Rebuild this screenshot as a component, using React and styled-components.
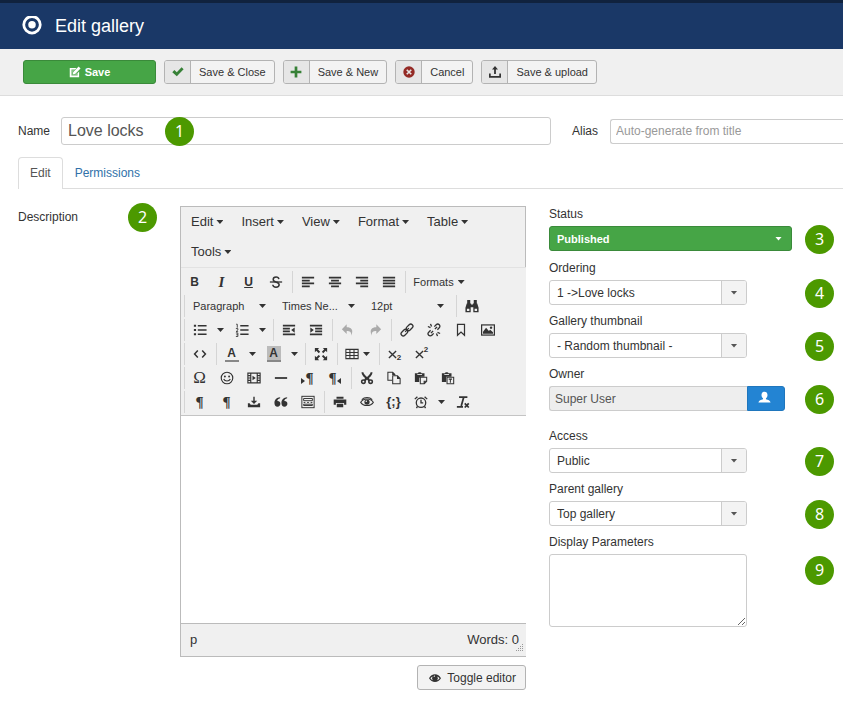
import React from "react";
import styled, { createGlobalStyle, css } from "styled-components";

const Global = createGlobalStyle`
  * { box-sizing: border-box; }
  body {
    margin: 0;
    background: #fff;
    color: #333;
    font: 12px/18px "Liberation Sans", Arial, sans-serif;
  }
  button, input, select, textarea { font: inherit; color: inherit; margin: 0; }
`;

/* ---------- icons ---------- */

const Svg = styled.svg`
  display: block;
  flex: none;
  width: ${(p) => p.$size || 14}px;
  height: ${(p) => p.$size || 14}px;
  color: ${(p) => p.$color || "inherit"};
  fill: currentColor;
`;

const line = { fill: "none", stroke: "currentColor" };

const shapes = {
  target: (
    <>
      <circle cx="8" cy="7" r="6.6" {...line} strokeWidth="2.2" />
      <circle cx="8" cy="7" r="3" />
    </>
  ),
  compose: (
    <>
      <path d="M1 2.500h9L8.200 4.600H3.300v8.100h8.100V9.500l2.100-2.100V15H1z" />
      <path d="M12.900.8l2.500 2.400-7.200 7.300-3.300.9.8-3.400z" />
      <path d="M3.300 4.600h4.900L5.300 7.600l-.9 4.300 4.300-.9 2.700-2.600v4.300H3.300z" opacity=".35" />
    </>
  ),
  check: <path d="M.4 8.200l2.800-2.900 3.200 3L12.800 1.600l2.700 2.800-9.100 9.300z" />,
  plus: <path d="M6.200.8h3.600v5.400h5.400v3.600H9.800v5.400H6.200V9.800H.8V6.200h5.400z" />,
  cancel: (
    <>
      <circle cx="8" cy="8" r="7.600" />
      <path d="M5 5l6 6M11 5l-6 6" stroke="#e6e6e6" strokeWidth="2.200" />
    </>
  ),
  upload: (
    <path d="M8 0l4 4.600H9.200v6H6.800v-6H4zM0 10h2.300v3.200h11.400V10H16v5.600H0z" />
  ),
  user: (
    <path d="M8 1c2.200 0 3.700 1.500 3.700 4 0 1.700-.8 3.200-1.900 4v1.300c2.600.6 5.200 1.600 5.700 3.700H.5c.5-2.100 3.100-3.100 5.700-3.700V9C5.100 8.200 4.300 6.700 4.300 5c0-2.500 1.500-4 3.700-4z" />
  ),
  eyeSolid: (
    <path
      fillRule="evenodd"
      d="M0 8.200C1.800 5 4.700 3.100 8 3.100s6.200 1.900 8 5.100c-1.800 3.200-4.700 5-8 5s-6.200-1.800-8-5zm1.900 0c.8 1.300 1.900 2.200 3.100 2.800a4.500 4.500 0 0 1-.3-5c-1.100.4-2 1.200-2.800 2.200zm9.200-2.300a4.500 4.500 0 0 1-.2 5.100c1.300-.6 2.400-1.500 3.200-2.800-.8-1-1.800-1.800-3-2.300zM8 4.700c-1 0-1.800.8-1.800 1.800h1c0-.5.3-.9.8-.9z"
    />
  ),
  strike: (
    <>
      <path d="M1 8h14" {...line} strokeWidth="1.500" />
      <path d="M11.300 4.600C11 3 9.700 2.300 8.100 2.300c-1.900 0-3.300 1-3.300 2.700 0 1.500 1.200 2.300 3.200 3 2.400.7 3.600 1.500 3.600 3.200 0 1.700-1.500 2.700-3.600 2.700-2 0-3.500-.9-3.700-2.800" {...line} strokeWidth="1.700" />
    </>
  ),
  left: <path d="M1 2h14v2H1zM1 5.300h9v2H1zM1 8.600h14v2H1zM1 11.900h9v2H1z" />,
  center: <path d="M1 2h14v2H1zM3.500 5.300h9v2h-9zM1 8.600h14v2H1zM3.500 11.900h9v2h-9z" />,
  right: <path d="M1 2h14v2H1zM6 5.300h9v2H6zM1 8.600h14v2H1zM6 11.900h9v2H6z" />,
  justify: <path d="M1 2h14v2H1zM1 5.300h14v2H1zM1 8.600h14v2H1zM1 11.900h14v2H1z" />,
  find: (
    <path
      fillRule="evenodd"
      d="M2.500 1h3.500v4h1v1.300h2V5h1V1h3.500v4H14l1.500 5v5H9.500V9.500h-3V15h-6v-5L2 5h.5zm-.3 10v2.700H5V11zm8.800 0v2.700h2.800V11z"
    />
  ),
  ul: <path d="M1 2h2.500v2.300H1zM5.500 2.300h10v1.700h-10zM1 6.900h2.500v2.300H1zM5.500 7.200h10v1.700h-10zM1 11.700h2.500V14H1zM5.500 12h10v1.700h-10z" />,
  ol: (
    <>
      <path d="M6 2.300h9.500V4H6zM6 7.200h9.500v1.700H6zM6 12h9.500v1.700H6z" />
      <path d="M1.300 1.400h1.300v4M1 6.400h2.300v1.500L1.200 9.900h2.400M1 11.400h2.300v4H1M1.500 13.400h1.800" {...line} strokeWidth="1" />
    </>
  ),
  outdent: <path d="M1 2h14v2H1zM1 5.300h8v2H1zM1 8.600h8v2H1zM1 11.900h14v2H1zM14.500 5v6l-4-3z" />,
  indent: <path d="M1 2h14v2H1zM7 5.300h8v2H7zM7 8.600h8v2H7zM1 11.900h14v2H1zM1.500 5v6l4-3z" />,
  undo: <path d="M6.500 1.500v3.300c5 0 8.300 2.700 5.200 9.700.4-4.500-1.500-5.500-5.200-5.500v3.500L1 7z" />,
  redo: <path d="M9.500 1.500v3.300c-5 0-8.300 2.700-5.200 9.700C3.900 10 5.800 9 9.500 9v3.500L15 7z" />,
  link: (
    <g transform="rotate(-45 8 8)" {...line} strokeWidth="1.500">
      <rect x="-.5" y="5.500" width="8.500" height="5" rx="2.500" />
      <rect x="8" y="5.500" width="8.500" height="5" rx="2.500" />
      <path d="M5 8h6" />
    </g>
  ),
  unlink: (
    <g {...line} strokeWidth="1.500">
      <g transform="rotate(-45 8 8)">
        <path d="M5 5.500H2a2.500 2.500 0 0 0 0 5h3M11 5.500h3a2.500 2.500 0 0 1 0 5h-3M3 8h3.500M9.500 8H13" />
      </g>
      <path d="M4 1l1.200 3M1 4l3 1.200M12 15l-1.200-3M15 12l-3-1.200" />
    </g>
  ),
  bookmark: <path d="M4 1.500h8V14l-4-3.600L4 14z" {...line} strokeWidth="1.400" />,
  image: (
    <>
      <rect x=".7" y="2.200" width="14.600" height="11.600" {...line} strokeWidth="1.400" />
      <path d="M2.300 12.300V10l3.500-4.500L9 9l1.500-1.300 3.200 3v1.600z" />
      <circle cx="11.500" cy="5.300" r="1.400" />
    </>
  ),
  code: <path d="M5.500 4L1.800 8l3.700 4M10.500 4l3.700 4-3.700 4" {...line} strokeWidth="1.700" />,
  fullscreen: (
    <path d="M1 1h5L4.300 2.700 7 5.400 5.400 7 2.700 4.300 1 6zM15 1v5l-1.700-1.700L10.600 7 9 5.400l2.700-2.700L10 1zM1 15v-5l1.700 1.700L5.400 9 7 10.600l-2.700 2.700L6 15zM15 15h-5l1.700-1.700L9 10.600 10.600 9l2.700 2.700L15 10z" />
  ),
  table: <path d="M1 2.700h14v10.600H1zM1 6.200h14M1 9.700h14M5.600 2.700v10.600M10.300 2.700v10.600" {...line} strokeWidth="1.200" />,
  smile: (
    <>
      <circle cx="8" cy="8" r="6.600" {...line} strokeWidth="1.300" />
      <circle cx="5.600" cy="6.200" r="1.100" />
      <circle cx="10.400" cy="6.200" r="1.100" />
      <path d="M4.200 9.200c1.500 3 6.100 3 7.600 0" {...line} strokeWidth="1.300" />
    </>
  ),
  film: (
    <>
      <path d="M1 2.500h14v11H1zM4.300 2.500v11M11.700 2.500v11M1 5.300h3.300M1 8h3.300M1 10.700h3.300M11.700 5.300H15M11.700 8H15M11.700 10.700H15" {...line} strokeWidth="1.300" />
      <path d="M6.300 5.300v5.400L10 8z" />
    </>
  ),
  rule: <path d="M1 7h14v2H1z" />,
  scissors: (
    <g {...line} strokeWidth="2.200">
      <path d="M2.800 1.500c0 3 2 4.500 8.200 9.500M13.200 1.500c0 3-2 4.500-8.200 9.500M5.500 8h5" />
      <ellipse cx="3.900" cy="12.200" rx="2" ry="1.900" strokeWidth="1.800" />
      <ellipse cx="12.100" cy="12.200" rx="2" ry="1.900" strokeWidth="1.800" />
    </g>
  ),
  copy: (
    <g {...line} strokeWidth="1.200">
      <path d="M6 10.500H1v-9h5.500l2.500 2.500v1M6.500 1.500V4H9" />
      <path d="M6.500 5.500H12l3 3v6H6.500zM12 5.500v3h3" fill="#f0f0f0" />
    </g>
  ),
  paste: (
    <>
      <path d="M1 2.500h3.500C4.500 1 8.500 1 8.500 2.500H12v4H7.500L6 8v4.500H1z" />
      <path d="M7.200 7.200h7.300v4.600l-2.700 2.700H7.200zM14.300 11.600h-2.700v2.800" {...line} strokeWidth="1.200" />
      <path d="M3.800 4h5.400" stroke="#f0f0f0" strokeWidth="1" />
    </>
  ),
  pasteText: (
    <>
      <path d="M1 2.500h3.500C4.500 1 8.500 1 8.500 2.500H12v4H6v6H1z" />
      <path d="M6.900 7.100h7.600v7.400H6.900zM8.800 9.300h3.800M10.700 9.300v4" {...line} strokeWidth="1.200" />
      <path d="M3.800 4h5.400" stroke="#f0f0f0" strokeWidth="1" />
    </>
  ),
  download: (
    <path d="M7.200 2h1.600v4.600h2.900L8 10.400 4.300 6.600h2.900zM1 9.500h2l1.200 1.700h7.600L13 9.500h2V14H1z" />
  ),
  quote: (
    <path d="M7 2.500v1.300C5 4.300 3.900 5.500 3.800 7 5.800 6.800 7.300 8 7.300 10c0 1.900-1.400 3.300-3.300 3.300C1.800 13.300.5 11.600.5 9c0-3.700 2.600-6.200 6.500-6.500zM15 2.500v1.300c-2 .5-3.100 1.700-3.200 3.200 2-.2 3.500 1 3.500 3 0 1.900-1.400 3.300-3.300 3.300-2.200 0-3.500-1.700-3.500-4.300 0-3.700 2.600-6.200 6.500-6.500z" />
  ),
  template: (
    <g {...line} strokeWidth="1.100">
      <rect x="1" y="1.500" width="14" height="13" />
      <path d="M3 4h10v2.500H3zM3 8.500h2M7 8.500h2M11 8.500h2M3 12h10v-1.500H3z" />
    </g>
  ),
  print: (
    <path fillRule="evenodd" d="M4 2h8v2.300H4zM.8 5.200h14.400v6H12.700V9H3.300v2.200H.8zM4.300 10h7.400v4H4.300z" />
  ),
  eye: (
    <>
      <path d="M.8 8.400c3-5 11.400-5 14.400 0-3 4.800-11.400 4.800-14.400 0zM2 5.200c3.200-3 8.800-3 12 0" {...line} strokeWidth="1.200" />
      <circle cx="8" cy="8" r="3" />
      <circle cx="7.200" cy="7.100" r=".9" fill="#f0f0f0" />
    </>
  ),
  clock: (
    <g {...line} strokeWidth="1.500">
      <circle cx="8" cy="8.800" r="5.400" />
      <path d="M8 5.500V9h2.500M.9 4.700l3-2.800M15.100 4.700l-3-2.800M4 13l-1.200 2M12 13l1.200 2" />
    </g>
  ),
  clear: (
    <path d="M3.500 2.500h9.500M8.800 2.500L6 12.500M1 13.500h7M10 9.500l4.600 4.800M14.600 9.500L10 14.300" {...line} strokeWidth="2" />
  ),
};

function Icon({ name, size, color }) {
  return (
    <Svg viewBox="0 0 16 16" $size={size} $color={color} aria-hidden="true">
      {shapes[name]}
    </Svg>
  );
}

const Caret = styled.i`
  flex: none;
  width: 7px;
  height: 4px;
  background: currentColor;
  clip-path: polygon(0 0, 100% 0, 50% 100%);
`;

/* ---------- page header and toolbar ---------- */

const Page = styled.main`
  overflow: hidden;
`;

const Header = styled.header`
  display: flex;
  align-items: center;
  gap: 13px;
  height: 49px;
  padding: 0 22px;
  border-top: 3px solid #10223e;
  background: #1a3867;
  color: #fff;
`;

const Title = styled.h1`
  margin: 0;
  font-size: 18px;
  font-weight: normal;
  line-height: 24px;
`;

const Toolbar = styled.div`
  display: flex;
  gap: 8px;
  padding: 11px 23px;
  background: #f0f0f0;
  border-bottom: 1px solid #ddd;
`;

const ToolbarButton = styled.button`
  display: flex;
  align-items: stretch;
  height: 24px;
  padding: 0;
  border: 1px solid #b3b3b3;
  border-radius: 3px;
  background: #f3f3f3;
  font-size: 11px;
  line-height: 22px;
  overflow: hidden;
  white-space: nowrap;
`;

const ButtonIcon = styled.span`
  display: grid;
  place-items: center;
  width: 26px;
  background: #e6e6e6;
  border-right: 1px solid #b3b3b3;
`;

const ButtonText = styled.span`
  padding: 0 8px;
`;

const SaveButton = styled(ToolbarButton)`
  align-items: center;
  justify-content: center;
  gap: 4px;
  width: 133px;
  border-color: #3a8a3a;
  background: #46a546;
  color: #fff;
  font-weight: bold;
`;

/* ---------- name, alias, tabs ---------- */

const inputBox = css`
  height: 25px;
  padding: 0 5px;
  border: 1px solid #ccc;
  border-radius: 3px;
  background: #fff;
  color: #555;
`;

const NameRow = styled.div`
  display: flex;
  align-items: center;
  margin: 21px 0 12px 18px;
`;

const NameLabel = styled.label`
  flex: 0 0 43px;
`;

const NameCell = styled.div`
  position: relative;
  flex: 1;
  display: flex;
`;

const NameInput = styled.input`
  ${inputBox}
  width: 100%;
  height: 28px;
  padding: 0 6px;
  font-size: 16px;
`;

const AliasLabel = styled.label`
  flex: 0 0 38px;
  margin-left: 21px;
`;

const AliasInput = styled.input`
  ${inputBox}
  flex: 0 0 233px;
  min-width: 0;
  border-right: 0;
  border-radius: 3px 0 0 3px;
  &::placeholder { color: #999; opacity: 1; }
`;

const Tabs = styled.nav`
  display: flex;
  margin-left: 18px;
  border-bottom: 1px solid #ddd;
`;

const Tab = styled.a`
  height: 31px;
  padding: 0 11px;
  line-height: 30px;
  text-decoration: none;
  border: 1px solid transparent;
  border-bottom: 0;
  border-radius: 4px 4px 0 0;
  color: #3071a9;
  ${(p) =>
    p.$active &&
    css`
      height: 32px;
      margin-bottom: -1px;
      border-color: #ddd;
      background: #fff;
      color: #555;
    `}
`;

/* ---------- numbered markers ---------- */

const Marker = styled.span`
  position: absolute;
  top: 50%;
  left: ${(p) => p.$left}px;
  display: grid;
  place-items: center;
  width: 29px;
  height: 29px;
  margin-top: -14px;
  border-radius: 50%;
  background: #4c9900;
  color: #fff;
  font: 16px/29px "Noto Sans", sans-serif;
  pointer-events: none;
`;

/* ---------- body ---------- */

const Body = styled.div`
  display: grid;
  grid-template-columns: 162px minmax(0, 1fr) 294px;
  align-items: start;
  margin-top: 16px;
  padding: 0 0 24px 18px;
`;

const DescriptionLabel = styled.label`
  position: relative;
  margin-top: 3px;
`;

const EditorColumn = styled.div`
  display: flex;
  flex-direction: column;
  align-items: flex-end;
  gap: 8px;
  margin: 1px 23px 0 0;
`;

const Editor = styled.section`
  width: 100%;
  border: 1px solid #bbb;
  border-right: 0;
  background: #f0f0f0;
`;

const MenuBar = styled.div`
  display: flex;
  flex-wrap: wrap;
  padding-left: 1px;
  border-right: 1px solid #bbb;
  & > :last-child { margin-right: 60px; }
`;

const MenuButton = styled.button`
  display: flex;
  align-items: center;
  gap: 3px;
  height: 30px;
  padding: 0 9px;
  border: 0;
  background: none;
  font-size: 13px;
`;

const Tools = styled.div`
  padding: 3px 0 0;
  border-top: 1px solid #e2e2e2;
  border-bottom: 1px solid #c4c4c4;
`;

const ToolRow = styled.div`
  display: flex;
  height: 24px;
  padding-left: 3px;
  &:first-child { padding-left: 0; }
  &:first-child > :first-child { border-left: 0; padding-left: 0; }
`;

const Group = styled.div`
  display: flex;
  align-items: center;
  height: 22px;
  padding: 0 3px 0 1px;
  border-left: 1px solid #d5d5d5;
`;

const ToolButton = styled.button`
  display: flex;
  align-items: center;
  justify-content: center;
  gap: 4px;
  width: ${(p) => p.$width || 27}px;
  height: 22px;
  padding: 0;
  border: 0;
  background: none;
  font-size: 11px;
  white-space: nowrap;
  &:disabled { color: #aaa; }
`;

const Glyph = styled.span`
  font: ${(p) => p.$font};
  text-decoration: ${(p) => (p.$underline ? "underline" : "none")};
`;

const ColorGlyph = styled.span`
  width: 14px;
  height: 16px;
  border-bottom: 2px solid #888;
  background: ${(p) => p.$fill || "none"};
  font: bold 12px/15px "Liberation Sans", sans-serif;
`;

const ScriptGlyph = styled.span`
  display: flex;
  align-items: center;
  height: 16px;
  font: bold 8px/8px "Liberation Sans", sans-serif;
`;

const ScriptDigit = styled.span`
  align-self: ${(p) => (p.$up ? "flex-start" : "flex-end")};
`;

const Direction = styled.span`
  display: flex;
  align-items: center;
  flex-direction: ${(p) => (p.$reverse ? "row-reverse" : "row")};
`;

const Arrow = styled.i`
  width: 0;
  height: 0;
  border: 3px solid transparent;
  border-${(p) => p.$side}: 4px solid currentColor;
  border-${(p) => (p.$side === "left" ? "right" : "left")}: 0;
  margin-top: 6px;
`;

const Overlay = styled.div`
  display: grid;
  & > * { grid-area: 1 / 1; }
`;

const ListBox = styled(Overlay)`
  width: 89px;
  align-items: center;
  & > i { justify-self: end; margin-right: 9px; pointer-events: none; }
`;

const ListSelect = styled.select`
  appearance: none;
  height: 22px;
  padding: 0 18px 0 7px;
  border: 0;
  background: none;
  font-size: 11px;
`;

const Canvas = styled.textarea`
  display: block;
  width: 100%;
  height: 207px;
  padding: 8px;
  border: 0;
  background: #fff;
  resize: none;
  outline: 0;
`;

const StatusBar = styled.footer`
  position: relative;
  display: flex;
  justify-content: space-between;
  padding: 0 7px 0 9px;
  border-top: 1px solid #bbb;
  font-size: 13px;
  line-height: 32px;
`;

const Grip = styled.svg`
  position: absolute;
  right: 2px;
  bottom: 3px;
  width: 9px;
  height: 9px;
  fill: #999;
`;

const ToggleButton = styled.button`
  display: flex;
  align-items: center;
  gap: 6px;
  height: 25px;
  padding: 0 9px 0 11px;
  border: 1px solid #b3b3b3;
  border-radius: 3px;
  background: #f3f3f3;
`;

/* ---------- side fields ---------- */

const Side = styled.div`
  display: flex;
  flex-direction: column;
  gap: 7px;
`;

const Field = styled.div`
  display: flex;
  flex-direction: column;
  gap: 3px;
  padding-bottom: ${(p) => p.$after || 0}px;
`;

const Control = styled.div`
  position: relative;
  display: flex;
  align-items: flex-start;
`;

const SelectBox = styled(Overlay)`
  width: 198px;
  height: 25px;
  border: 1px solid #ccc;
  border-radius: 3px;
  overflow: hidden;
  ${(p) =>
    p.$published &&
    css`
      width: 243px;
      border-color: #3a8a3a;
      background: #46a546;
      color: #fff;
      font-size: 11px;
      font-weight: bold;
    `}
`;

const Select = styled.select`
  appearance: none;
  width: 100%;
  padding: 0 28px 0 7px;
  border: 0;
  background: none;
  option { color: #333; }
`;

const SelectArrow = styled.span`
  justify-self: end;
  display: grid;
  place-items: center;
  width: 25px;
  pointer-events: none;
  color: #555;
  ${(p) =>
    p.$published
      ? css`
          color: #fff;
        `
      : css`
          border-left: 1px solid #ccc;
          background: #f3f3f3;
        `}
`;

const OwnerInput = styled.input`
  ${inputBox}
  width: 198px;
  border-right: 0;
  border-radius: 3px 0 0 3px;
  background: #eee;
`;

const OwnerButton = styled.button`
  display: grid;
  place-items: center;
  width: 38px;
  height: 25px;
  padding: 0 3px 2px 0;
  border: 1px solid #1f76bd;
  border-radius: 0 3px 3px 0;
  background: #2384d3;
  color: #fff;
`;

const Params = styled.textarea`
  ${inputBox}
  display: block;
  width: 198px;
  height: 73px;
`;

const ParamsMarkerRow = styled.div`
  position: absolute;
  top: 0;
  left: 0;
  height: 32px;
`;

/* ---------- composition ---------- */

const toolbarButtons = [
  { icon: "check", color: "#378137", text: "Save & Close" },
  { icon: "plus", color: "#378137", text: "Save & New" },
  { icon: "cancel", color: "#942a25", text: "Cancel" },
  { icon: "upload", color: "#333", text: "Save & upload" },
];

function Tool({ icon, label, disabled, children }) {
  return (
    <ToolButton type="button" aria-label={label || icon} disabled={disabled}>
      {children || <Icon name={icon} />}
    </ToolButton>
  );
}

function Split({ label }) {
  return (
    <ToolButton type="button" $width={15} aria-label={label}>
      <Caret />
    </ToolButton>
  );
}

function List({ label, value }) {
  return (
    <ListBox>
      <ListSelect aria-label={label}>
        <option>{value}</option>
      </ListSelect>
      <Caret />
    </ListBox>
  );
}

const cross = (
  <Svg viewBox="0 0 10 10" $size={9}>
    <path d="M1 1l8 8M9 1L1 9" {...line} strokeWidth="1.500" />
  </Svg>
);

const pilcrow = 'bold 15px/20px "Liberation Serif", serif';

function EditorTools() {
  return (
    <Tools>
      <ToolRow>
        <Group>
          <Tool label="Bold"><Glyph $font='bold 12px/20px "Liberation Sans", sans-serif'>B</Glyph></Tool>
          <Tool label="Italic"><Glyph $font='italic bold 15px/20px "Liberation Serif", serif'>I</Glyph></Tool>
          <Tool label="Underline"><Glyph $underline $font='bold 12px/20px "Liberation Sans", sans-serif'>U</Glyph></Tool>
          <Tool icon="strike" />
        </Group>
        <Group>
          <Tool icon="left" />
          <Tool icon="center" />
          <Tool icon="right" />
          <Tool icon="justify" />
        </Group>
        <Group>
          <ToolButton type="button" $width={64}>Formats<Caret /></ToolButton>
        </Group>
      </ToolRow>
      <ToolRow>
        <Group>
          <List label="Block format" value="Paragraph" />
          <List label="Font family" value="Times Ne..." />
          <List label="Font size" value="12pt" />
        </Group>
        <Group><Tool icon="find" /></Group>
      </ToolRow>
      <ToolRow>
        <Group>
          <Tool icon="ul" /><Split label="Bullet styles" />
          <Tool icon="ol" /><Split label="Number styles" />
        </Group>
        <Group><Tool icon="outdent" /><Tool icon="indent" /></Group>
        <Group><Tool icon="undo" disabled /><Tool icon="redo" disabled /></Group>
        <Group>
          <Tool icon="link" /><Tool icon="unlink" /><Tool icon="bookmark" /><Tool icon="image" />
        </Group>
      </ToolRow>
      <ToolRow>
        <Group><Tool icon="code" /></Group>
        <Group>
          <Tool label="Text color"><ColorGlyph>A</ColorGlyph></Tool><Split label="Text colors" />
          <Tool label="Background color"><ColorGlyph $fill="#bbb">A</ColorGlyph></Tool><Split label="Background colors" />
        </Group>
        <Group><Tool icon="fullscreen" /></Group>
        <Group>
          <ToolButton type="button" $width={37} aria-label="Table"><Icon name="table" /><Caret /></ToolButton>
        </Group>
        <Group>
          <Tool label="Subscript"><ScriptGlyph>{cross}<ScriptDigit>2</ScriptDigit></ScriptGlyph></Tool>
          <Tool label="Superscript"><ScriptGlyph>{cross}<ScriptDigit $up>2</ScriptDigit></ScriptGlyph></Tool>
        </Group>
      </ToolRow>
      <ToolRow>
        <Group>
          <Tool label="Special character"><Glyph $font='17px/20px "Liberation Serif", serif'>Ω</Glyph></Tool>
          <Tool icon="smile" /><Tool icon="film" /><Tool icon="rule" />
          <Tool label="Left to right">
            <Direction><Arrow $side="left" /><Glyph $font={pilcrow}>¶</Glyph></Direction>
          </Tool>
          <Tool label="Right to left">
            <Direction $reverse><Arrow $side="right" /><Glyph $font={pilcrow}>¶</Glyph></Direction>
          </Tool>
        </Group>
        <Group>
          <Tool icon="scissors" /><Tool icon="copy" /><Tool icon="paste" /><Tool icon="pasteText" />
        </Group>
      </ToolRow>
      <ToolRow>
        <Group>
          <Tool label="Show blocks"><Glyph $font={pilcrow}>¶</Glyph></Tool>
          <Tool label="Show invisible characters"><Glyph $font={pilcrow}>¶</Glyph></Tool>
          <Tool icon="download" /><Tool icon="quote" /><Tool icon="template" />
        </Group>
        <Group>
          <Tool icon="print" /><Tool icon="eye" />
          <Tool label="Code sample"><Glyph $font='bold 13px/20px "Liberation Sans", sans-serif'>{"{;}"}</Glyph></Tool>
          <Tool icon="clock" /><Split label="Date formats" /><Tool icon="clear" />
        </Group>
      </ToolRow>
    </Tools>
  );
}

function SelectField({ id, label, value, marker, published, after }) {
  return (
    <Field $after={after}>
      <label htmlFor={id}>{label}</label>
      <Control>
        <SelectBox $published={published}>
          <Select id={id}>
            <option>{value}</option>
          </Select>
          <SelectArrow $published={published}><Caret /></SelectArrow>
        </SelectBox>
        <Marker $left={256}>{marker}</Marker>
      </Control>
    </Field>
  );
}

export default function App() {
  return (
    <Page>
      <Global />
      <Header>
        <Icon name="target" size={20} />
        <Title>Edit gallery</Title>
      </Header>
      <Toolbar>
        <SaveButton type="button"><Icon name="compose" size={12} />Save</SaveButton>
        {toolbarButtons.map((b) => (
          <ToolbarButton type="button" key={b.text}>
            <ButtonIcon><Icon name={b.icon} color={b.color} size={12} /></ButtonIcon>
            <ButtonText>{b.text}</ButtonText>
          </ToolbarButton>
        ))}
      </Toolbar>

      <NameRow>
        <NameLabel htmlFor="name">Name</NameLabel>
        <NameCell>
          <NameInput id="name" defaultValue="Love locks" />
          <Marker $left={104}>1</Marker>
        </NameCell>
        <AliasLabel htmlFor="alias">Alias</AliasLabel>
        <AliasInput id="alias" placeholder="Auto-generate from title" />
      </NameRow>

      <Tabs>
        <Tab href="#edit" $active>Edit</Tab>
        <Tab href="#permissions">Permissions</Tab>
      </Tabs>

      <Body>
        <DescriptionLabel htmlFor="description">
          Description
          <Marker $left={110}>2</Marker>
        </DescriptionLabel>

        <EditorColumn>
          <Editor>
            <MenuBar>
              {["Edit", "Insert", "View", "Format", "Table", "Tools"].map((m) => (
                <MenuButton type="button" key={m}>{m}<Caret /></MenuButton>
              ))}
            </MenuBar>
            <EditorTools />
            <Canvas id="description" />
            <StatusBar>
              <span>p</span>
              <span>Words: 0</span>
              <Grip viewBox="0 0 9 9" aria-hidden="true">
                <path d="M7 0h1v1H7zM5 2h1v1H5zM7 2h1v1H7zM3 4h1v1H3zM5 4h1v1H5zM7 4h1v1H7zM1 6h1v1H1zM3 6h1v1H3zM5 6h1v1H5zM7 6h1v1H7z" />
              </Grip>
            </StatusBar>
          </Editor>
          <ToggleButton type="button"><Icon name="eyeSolid" size={12} />Toggle editor</ToggleButton>
        </EditorColumn>

        <Side>
          <SelectField id="status" label="Status" value="Published" marker="3" published after={1} />
          <SelectField id="ordering" label="Ordering" value="1 ->Love locks" marker="4" />
          <SelectField id="thumb" label="Gallery thumbnail" value="- Random thumbnail -" marker="5" />
          <Field $after={9}>
            <label htmlFor="owner">Owner</label>
            <Control>
              <OwnerInput id="owner" defaultValue="Super User" readOnly />
              <OwnerButton type="button" aria-label="Select user"><Icon name="user" size={13} /></OwnerButton>
              <Marker $left={256}>6</Marker>
            </Control>
          </Field>
          <SelectField id="access" label="Access" value="Public" marker="7" />
          <SelectField id="parent" label="Parent gallery" value="Top gallery" marker="8" />
          <Field>
            <label htmlFor="params">Display Parameters</label>
            <Control>
              <Params id="params" />
              <ParamsMarkerRow><Marker $left={256}>9</Marker></ParamsMarkerRow>
            </Control>
          </Field>
        </Side>
      </Body>
    </Page>
  );
}
